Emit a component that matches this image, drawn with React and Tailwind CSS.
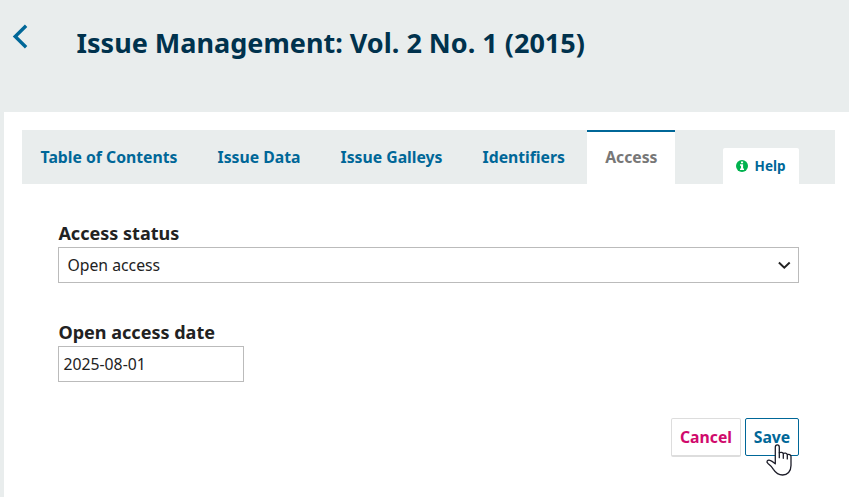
const tabs = ['Table of Contents', 'Issue Data', 'Issue Galleys', 'Identifiers'];

function HandCursor() {
  return (
    <svg className="absolute left-[19.7px] top-[25px] h-[34px] w-[28px]" viewBox="0 0 28 34" fill="#fff" stroke="#1c1c28" strokeWidth="1.3" strokeLinejoin="round" strokeLinecap="round">
      <path d="M10.3 20.8V4.2C10.3 1 14.3 1 14.3 4.2V9.7C15.5 9 17.8 9.2 18.3 10.5C19.6 9.7 21.8 10.1 22.3 11.5C23.8 11 26 11.7 26 13.6V22.5C26 28.5 22.4 32 17.6 32C12.7 32 10.6 29.7 8.4 26.3C6.7 23.4 5.3 22.3 3 20.5C0.7 18.6 2.6 16.4 5.1 17.3C7.4 18 8.6 19.4 10.3 20.8Z" />
      <path d="M14.3 9.7V14.7M18.3 10.7V15.3M22.3 11.7V15.9" fill="none" />
    </svg>
  );
}

export default function App() {
  return (
    <div className="flex h-[497px] w-[849px] flex-col overflow-hidden bg-[#e9eded] font-['Noto_Sans',sans-serif] text-[#222]">
      <header className="flex h-[112px] shrink-0 items-start">
        <svg className="ml-[12px] mt-[24px] h-[26px] w-[17px]" viewBox="0 0 17 26" fill="none" stroke="#006798" strokeWidth="3.4">
          <path d="M14.1 1.8L3.2 12.5L14.1 23.2" />
        </svg>
        <h1 className="ml-[47.5px] mt-[23px] whitespace-nowrap text-[27.03px] font-bold leading-[40px] text-[#00324d]">Issue Management: Vol. 2 No. 1 (2015)</h1>
      </header>
      <main className="ml-[4px] flex-1 bg-white pl-[18px] pr-[14px] pt-[18px]">
        <nav className="flex h-[54px] bg-[#e9eded] text-[15.75px] font-bold leading-[50px] text-[#006798]">
          {tabs.map((t) => (
            <a key={t} className="mr-[3.5px] whitespace-nowrap border-t-2 border-transparent pl-[18.6px] pr-[18px]">{t}</a>
          ))}
          <a className="ml-[0.4px] w-[88px] border-t-2 border-[#006798] bg-white pl-[18.3px] text-[#777]">Access</a>
          <a className="ml-auto mr-[36px] mt-[18px] flex h-[36px] w-[76px] items-center rounded-t-[2px] bg-white pl-[13px] text-[13.5px] leading-[36px]">
            <svg className="mr-[6.6px] h-[12px] w-[12px]" viewBox="0 0 12 12">
              <circle cx="6" cy="6" r="6" fill="#00b24e" />
              <path d="M5 1.5H7.1V3.2H5ZM4 4.3H7.1V8.6H8V10H4V8.6H5V5.7H4Z" fill="#fff" />
            </svg>
            Help
          </a>
        </nav>
        <form className="pl-[36px] pr-[36px] pt-[36px]">
          <label className="block h-[27px] pl-[0.4px] text-[18.05px] font-bold leading-[26px]">Access status</label>
          <div className="flex h-[36px] items-center justify-between border border-[#bbb] pl-[8.5px] pr-[7px] text-[15.75px]">
            <span className="leading-[24px]">Open access</span>
            <svg className="h-[14px] w-[14px]" viewBox="0 0 14 14" fill="none" stroke="#222" strokeWidth="2">
              <path d="M1.9 4.6L7.3 9.7L12.7 4.6" />
            </svg>
          </div>
          <label className="mt-[36px] block h-[27px] pl-[0.4px] text-[18.05px] font-bold leading-[26px]">Open access date</label>
          <div className="flex h-[36px] w-[186px] items-center border border-[#bbb] pl-[4.5px] text-[15.75px] leading-[24px]">2025-08-01</div>
          <div className="mt-[36px] flex justify-end gap-[4px] text-[15.75px] font-bold leading-[36px]">
            <button type="button" className="h-[39px] w-[70px] rounded-[2px] border border-b-2 border-[#ddd] text-[#d00a6c]">Cancel</button>
            <div className="relative">
              <button type="button" className="h-[38px] w-[54px] rounded-[2px] border border-[#006798] text-[#006798]">Save</button>
              <HandCursor />
            </div>
          </div>
        </form>
      </main>
    </div>
  );
}
